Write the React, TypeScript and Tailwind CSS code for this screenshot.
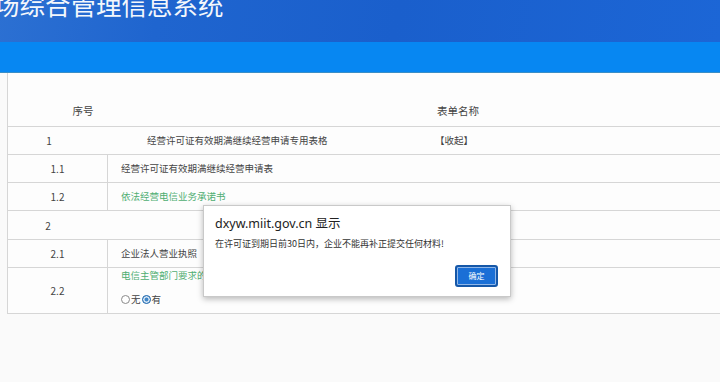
import React from "react";

const cjk = { fontFamily: '"Microsoft YaHei", "Noto Sans CJK SC", "Noto Sans", sans-serif' };

const Radio = ({ checked }: { checked?: boolean }) => (
  <span
    className={
      "inline-block w-[9px] h-[9px] rounded-full border align-[-1px] " +
      (checked ? "border-[#2a6fb0] bg-[#3f86c8] shadow-[inset_0_0_0_1.5px_#dbe9f6]" : "border-[#8a8a8a] bg-white")
    }
  />
);

const SubRow = ({
  no,
  h = "h-[28px]",
  top,
  children,
}: {
  no: string;
  h?: string;
  top?: boolean;
  children: React.ReactNode;
}) => (
  <div className={"flex border-b border-[#d6d6d6] " + h}>
    <div className="w-[100px] shrink-0 border-r border-[#d6d6d6] flex items-center justify-center text-[10px] text-[#444]">
      {no}
    </div>
    <div
      className={
        "flex-1 pl-[13px] flex flex-col text-[9.5px] text-[#444] " + (top ? "justify-start pt-[1px]" : "justify-center")
      }
    >
      {children}
    </div>
  </div>
);

export default function App() {
  return (
    <div className="w-[720px] h-[382px] overflow-hidden bg-[#fafafa] relative" style={cjk}>
      {/* header */}
      <div className="h-[42px] bg-[linear-gradient(100deg,#2c70d2_0%,#1f65cf_22%,#1a5fcc_55%,#1c66d6_100%)] overflow-hidden">
        <div className="text-white text-[25.5px] leading-none font-normal -mt-[9px] -ml-[6px] opacity-95">
          场综合管理信息系统
        </div>
      </div>
      <div className="h-[31px] bg-[#0787f2] border-b border-[#3a8ec6]" />

      {/* table */}
      <div className="ml-[7px] border-l border-[#d6d6d6] bg-[#fdfdfd]">
        <div className="h-[54px] flex items-end pb-[7px] border-b border-[#d6d6d6] text-[10.5px] text-[#444]">
          <div className="w-[150px] text-center">序号</div>
          <div className="pl-[279px]">表单名称</div>
        </div>
        <div className="h-[28px] flex items-center border-b border-[#d6d6d6] text-[9.5px] text-[#444]">
          <div className="w-[82px] text-center text-[10px]">1</div>
          <div className="w-[288px] pl-[57px]">经营许可证有效期满继续经营申请专用表格</div>
          <div className="pl-[57px]">【收起】</div>
        </div>
        <SubRow no="1.1">经营许可证有效期满继续经营申请表</SubRow>
        <SubRow no="1.2">
          <span className="text-[#4fae72]">依法经营电信业务承诺书</span>
        </SubRow>
        <div className="h-[29px] flex items-center border-b border-[#d6d6d6] text-[10px] text-[#444]">
          <div className="w-[80px] text-center">2</div>
        </div>
        <SubRow no="2.1">企业法人营业执照</SubRow>
        <SubRow no="2.2" h="h-[46px]" top>
          <span className="text-[#4fae72] leading-[12px]">电信主管部门要求的其他材料</span>
          <span className="mt-[14px] flex items-center gap-[1px] leading-none">
            <Radio />
            <span>无</span>
            <Radio checked />
            <span>有</span>
          </span>
        </SubRow>
      </div>

      {/* alert dialog */}
      <div className="absolute left-[203px] top-[205px] w-[308px] h-[92px] bg-white border border-[#c9c9c9] shadow-[0_2px_6px_rgba(0,0,0,0.28)] px-[11px] pt-[9px]">
        <div className="text-[12.5px] text-[#222] leading-[18px]" style={{ fontFamily: '"Noto Sans", "Noto Sans CJK SC", sans-serif' }}>
          dxyw.miit.gov.cn 显示
        </div>
        <div className="text-[9px] text-[#333] mt-[4px] leading-[14px]">
          在许可证到期日前30日内，企业不能再补正提交任何材料!
        </div>
        <div className="flex justify-end mt-[14px] pr-[1px]">
          <button className="w-[43px] h-[22px] rounded-[3px] bg-[#1a6fd6] border-2 border-[#1557a8] text-white text-[8px] flex items-center justify-center shadow-[inset_0_0_0_1px_#8fb6e8]">
            确定
          </button>
        </div>
      </div>
    </div>
  );
}
